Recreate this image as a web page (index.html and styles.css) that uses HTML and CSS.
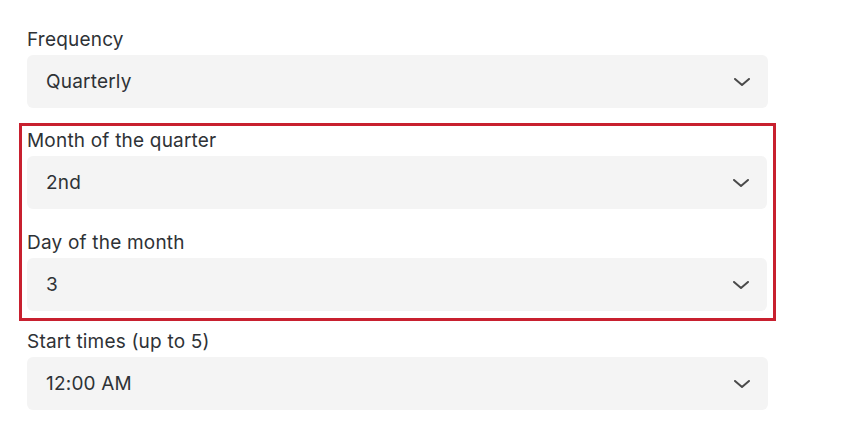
FILE: index.html
```html
<!DOCTYPE html>
<html>
<head>
    <meta charset="utf-8">
    <title>Schedule</title>
    <link rel="stylesheet" href="styles.css">
</head>
<body>
    <div class="form">
        <div class="field">
            <div class="label">Frequency</div>
            <div class="select">
                <span>Quarterly</span>
                <svg class="chevron" viewBox="0 0 16 8"><path d="M1 1 L8 7 L15 1"/></svg>
            </div>
        </div>

        <!-- highlighted options -->
        <div class="highlight">
            <div class="field">
                <div class="label">Month of the quarter</div>
                <div class="select">
                    <span>2nd</span>
                    <svg class="chevron" viewBox="0 0 16 8"><path d="M1 1 L8 7 L15 1"/></svg>
                </div>
            </div>
            <div class="field next">
                <div class="label">Day of the month</div>
                <div class="select">
                    <span>3</span>
                    <svg class="chevron" viewBox="0 0 16 8"><path d="M1 1 L8 7 L15 1"/></svg>
                </div>
            </div>
        </div>

        <div class="field after">
            <div class="label">Start times (up to 5)</div>
            <div class="select">
                <span>12:00 AM</span>
                <svg class="chevron" viewBox="0 0 16 8"><path d="M1 1 L8 7 L15 1"/></svg>
            </div>
        </div>
    </div>
</body>
</html>
```

FILE: styles.css
```css
body
{
    margin: 0;
    background: #ffffff;
    font-family: "Inter", "Liberation Sans", sans-serif;
    color: #2e3236;
}

.form
{
    width: 741px;
    padding: 25px 0 0 27px;
}

.label
{
    font-size: 19px;
    line-height: 24px;
    height: 24px;
    padding-top: 3px;
    margin-bottom: 3px;
    letter-spacing: 0.2px;
}

.select
{
    height: 53px;
    background-color: #f4f4f4;
    border-radius: 6px;
    display: flex;
    align-items: center;
    justify-content: space-between;
    padding: 0 18px 0 19px;
    font-size: 19px;
    letter-spacing: 0.2px;
    box-sizing: border-box;
}

.chevron
{
    width: 16px;
    height: 8px;
    fill: none;
    stroke: #4a4a4a;
    stroke-width: 2;
    stroke-linecap: round;
    stroke-linejoin: round;
    margin-top: 1px;
}

.highlight
{
    margin: 15px 0 0 -8px;
    width: 757px;
    box-sizing: border-box;
    border: 3px solid #c8202f;
    padding: 0 6px 7px 5px;
}

.field.next
{
    margin-top: 19px;
}

.field.after
{
    margin-top: 6px;
}
```
